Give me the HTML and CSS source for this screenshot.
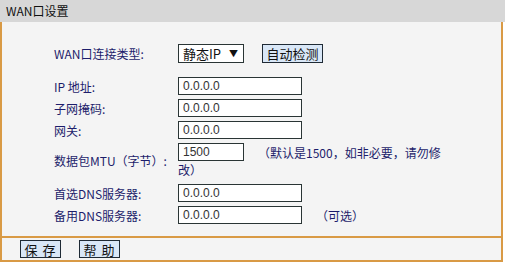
FILE: index.html
```html
<!DOCTYPE html>
<html>
<head>
<meta charset="utf-8">
<link rel="stylesheet" href="styles.css">
</head>
<body>
<div class="panel">
  <div class="title">WAN口设置</div>
  <div class="content">
    <div class="row row-first">
      <div class="label">WAN口连接类型:</div>
      <div class="value">
        <span class="select">静态IP<span class="arrow">▼</span></span>
        <span class="btn btn-detect">自动检测</span>
      </div>
    </div>
    <div class="row row-gap">
      <div class="label">IP 地址:</div>
      <div class="value"><span class="input">0.0.0.0</span></div>
    </div>
    <div class="row">
      <div class="label">子网掩码:</div>
      <div class="value"><span class="input">0.0.0.0</span></div>
    </div>
    <div class="row">
      <div class="label">网关:</div>
      <div class="value"><span class="input">0.0.0.0</span></div>
    </div>
    <div class="row row-mtu">
      <div class="label">数据包MTU（字节）:</div>
      <div class="value-wrap">
        <div class="value"><span class="input input-short">1500</span><span class="note">（默认是1500，如非必要，请勿修</span></div>
        <div class="note-cont">改）</div>
      </div>
    </div>
    <div class="row row-after">
      <div class="label">首选DNS服务器:</div>
      <div class="value"><span class="input">0.0.0.0</span></div>
    </div>
    <div class="row">
      <div class="label">备用DNS服务器:</div>
      <div class="value"><span class="input">0.0.0.0</span><span class="note note-opt">（可选）</span></div>
    </div>
  </div>
  <div class="footer">
    <span class="btn btn-foot">保 存</span>
    <span class="btn btn-foot">帮 助</span>
  </div>
</div>
</body>
</html>
```

FILE: styles.css
```css
html, body {
  margin: 0;
  padding: 0;
  background: #ffffff;
}
body {
  font-family: "Noto Sans CJK SC", "Liberation Sans", sans-serif;
  font-size: 12px;
  width: 505px;
  height: 265px;
  overflow: hidden;
}
.panel {
  width: 503px;
}
.title {
  height: 22px;
  line-height: 22px;
  background: #d7d7d7;
  color: #111;
  padding-left: 6px;
  width: 499px;
}
.content {
  background: #f4f4f4;
  border-left: 2px solid #d99a45;
  border-right: 2px solid #d99a45;
  height: 214px;
  box-sizing: border-box;
  padding-top: 20px;
  padding-left: 52px;
}
.row {
  display: flex;
  align-items: center;
  min-height: 22px;
}
.row-first {
  height: 21px;
}
.row-gap {
  margin-top: 11px;
}
.label {
  width: 124px;
  flex: none;
  color: #1d1d6b;
}
.value {
  display: flex;
  align-items: center;
}
.value-wrap {
  padding-top: 1px;
  padding-bottom: 2px;
}
.value-wrap .value {
  height: 20px;
}
.note-cont {
  color: #1d1d6b;
  line-height: 16px;
}
.row-after {
  margin-top: 2px;
}
.select {
  display: inline-flex;
  align-items: center;
  box-sizing: border-box;
  width: 66px;
  height: 19px;
  background: #fff;
  border: 1px solid #2a3535;
  padding-left: 4px;
  color: #111;
  font-size: 13px;
}
.arrow {
  font-size: 9px;
  margin-left: auto;
  margin-right: 5px;
}
.btn {
  display: inline-flex;
  align-items: center;
  justify-content: center;
  box-sizing: border-box;
  background: #d9e7f7;
  border: 1px solid #1f2a35;
  color: #111;
  font-size: 13px;
}
.btn-detect {
  width: 61px;
  height: 19px;
  margin-left: 18px;
}
.input {
  display: inline-flex;
  align-items: center;
  box-sizing: border-box;
  width: 124px;
  height: 18px;
  background: #fff;
  border: 1px solid #2a3535;
  padding-left: 4px;
  font-family: "Liberation Sans", sans-serif;
  font-size: 12px;
  color: #333;
}
.input-short {
  width: 66px;
}
.note {
  color: #1d1d6b;
  margin-left: 14px;
}
.note-opt {
  margin-left: 14px;
}
.footer {
  background: #f4f4f4;
  border: 2px solid #d99a45;
  height: 26px;
  box-sizing: border-box;
  display: flex;
  align-items: center;
  padding-left: 18px;
  gap: 18px;
}
.btn-foot {
  width: 41px;
  height: 18px;
  letter-spacing: 1px;
}
```
